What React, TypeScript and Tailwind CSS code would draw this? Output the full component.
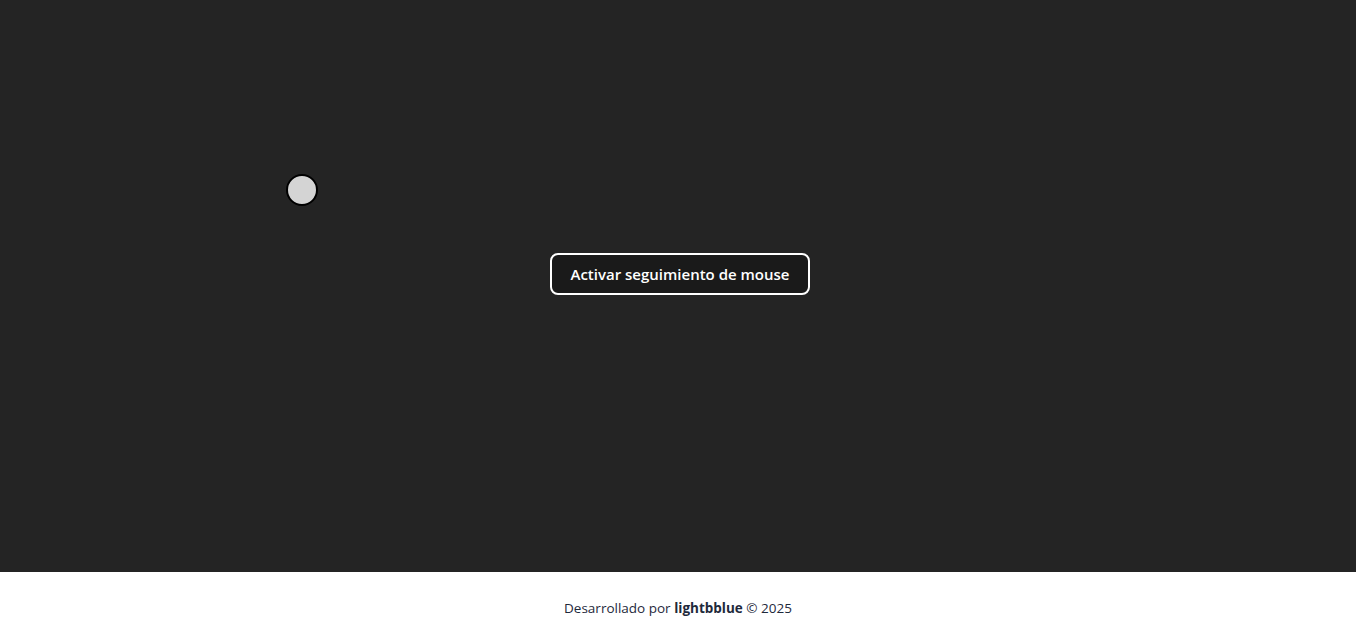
export default function App() {
  return (
    <div className="min-h-screen flex flex-col" style={{ fontFamily: '"Open Sans", "Noto Sans", sans-serif' }}>
      <main className="relative h-[572px] bg-[#242424] flex items-center justify-center pb-6 pl-1">
        {/* cursor follower */}
        <div className="absolute left-[286px] top-[174px] w-8 h-8 rounded-full bg-[#d4d4d4] border-2 border-black" />
        <button className="h-[42px] px-[18px] rounded-lg border-2 border-white bg-[#1a1a1a] text-white text-[15px] font-semibold">
          Activar seguimiento de mouse
        </button>
      </main>
      <footer className="h-[66px] bg-white flex items-center justify-center pt-1.5 text-[13.5px] text-[#1e293b]">
        <p>
          Desarrollado por <span className="font-bold">lightbblue</span> © 2025
        </p>
      </footer>
    </div>
  );
}
